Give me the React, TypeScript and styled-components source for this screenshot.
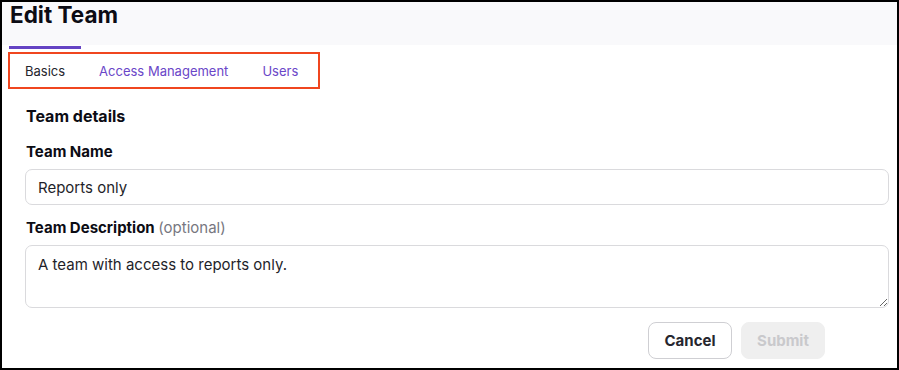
import React from 'react'
import styled, { createGlobalStyle } from 'styled-components'

const GlobalStyle = createGlobalStyle`
  * { box-sizing: border-box; }
  html, body { margin: 0; padding: 0; background: #fff; }
  body { font-family: Inter, "Noto Sans", Arial, sans-serif; color: #1f1f2a; }
`

const Frame = styled.div`
  width: 899px;
  height: 370px;
  border: 2px solid #000;
  background: #fff;
  overflow: hidden;
`

const Header = styled.header`
  height: 43px;
  background: #f9f9fb;
  padding: 1px 8px 0;
`

const Title = styled.h1`
  margin: 0;
  font-size: 22.5px;
  line-height: 24px;
  font-weight: 700;
  color: #0c0c14;
`

const TabRow = styled.nav`
  position: relative;
  display: flex;
  margin-top: 1px;
  padding-left: 7px;
`

const Tab = styled.button<{ $active?: boolean }>`
  border: 0;
  border-top: 3px solid ${p => (p.$active ? '#6544c4' : 'transparent')};
  background: none;
  padding: 12px 16px 12px;
  margin-right: 2px;
  font-family: inherit;
  font-size: 13px;
  line-height: 20px;
  color: ${p => (p.$active ? '#24242c' : '#6a46c8')};
  cursor: pointer;
`

const Highlight = styled.div`
  position: absolute;
  left: 6px;
  top: 6px;
  width: 312px;
  height: 37px;
  border: 2px solid #f0461f;
  pointer-events: none;
`

const Content = styled.section`
  padding: 12px 8px 0 23px;
`

const SectionTitle = styled.h2`
  margin: 0 0 0 1px;
  font-size: 16px;
  line-height: 22px;
  font-weight: 700;
  color: #0c0c14;
`

const Field = styled.div`
  display: flex;
  flex-direction: column;
  gap: 7px;
  margin-top: 15px;
  & + & { margin-top: 13px; }
`

const Label = styled.label`
  margin-left: 1px;
  font-size: 15px;
  line-height: 20px;
  font-weight: 700;
  color: #0c0c14;
`

const Hint = styled.span`
  font-weight: 400;
  color: #77777f;
`

const TextInput = styled.input`
  height: 36px;
  border: 1px solid #dadadd;
  border-radius: 7px;
  padding: 0 12px;
  font-family: inherit;
  font-size: 15px;
  color: #1f1f2a;
  outline: none;
`

const TextArea = styled.textarea`
  height: 63px;
  border: 1px solid #dadadd;
  border-radius: 7px;
  padding: 9px 12px;
  font-family: inherit;
  font-size: 15px;
  line-height: 20px;
  color: #1f1f2a;
  outline: none;
`

const Actions = styled.div`
  display: flex;
  justify-content: flex-end;
  gap: 9px;
  margin-top: 14px;
  padding-right: 64px;
`

const Button = styled.button<{ $disabled?: boolean }>`
  width: 84px;
  height: 37px;
  border-radius: 8px;
  border: 1px solid ${p => (p.$disabled ? '#efefef' : '#cfcfd3')};
  background: ${p => (p.$disabled ? '#efefef' : '#fff')};
  color: ${p => (p.$disabled ? '#c9c9cc' : '#26262e')};
  font-family: inherit;
  font-size: 15px;
  font-weight: 700;
  cursor: ${p => (p.$disabled ? 'default' : 'pointer')};
`

export default function App() {
  return (
    <>
      <GlobalStyle />
      <Frame>
        <Header>
          <Title>Edit Team</Title>
        </Header>
        <TabRow>
          <Tab $active>Basics</Tab>
          <Tab>Access Management</Tab>
          <Tab>Users</Tab>
          <Highlight />
        </TabRow>
        <Content>
          <SectionTitle>Team details</SectionTitle>
          <Field>
            <Label htmlFor="team-name">Team Name</Label>
            <TextInput id="team-name" defaultValue="Reports only" />
          </Field>
          <Field>
            <Label htmlFor="team-desc">
              Team Description <Hint>(optional)</Hint>
            </Label>
            <TextArea id="team-desc" defaultValue="A team with access to reports only." />
          </Field>
          <Actions>
            <Button>Cancel</Button>
            <Button $disabled disabled>Submit</Button>
          </Actions>
        </Content>
      </Frame>
    </>
  )
}
